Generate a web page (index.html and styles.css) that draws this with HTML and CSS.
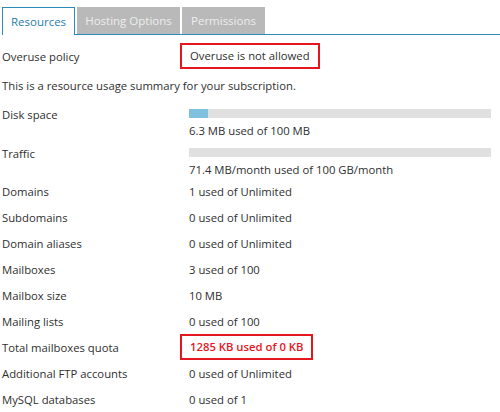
FILE: index.html
```html
<!DOCTYPE html>
<html>
<head>
<meta charset="utf-8">
<link rel="stylesheet" href="styles.css">
</head>
<body>
<div class="tabs">
  <div class="tab active">Resources</div>
  <div class="tab hosting">Hosting Options</div>
  <div class="tab perms">Permissions</div>
</div>
<div class="row first">
  <div class="label">Overuse policy</div>
  <div class="value"><span class="boxed">Overuse is not allowed</span></div>
</div>
<p class="summary">This is a resource usage summary for your subscription.</p>
<div class="bar-row disk">
  <div class="label">Disk space</div>
  <div class="value">
    <div class="bar"><div class="fill" style="width:6.3%"></div></div>
    <div class="bar-text">6.3 MB used of 100 MB</div>
  </div>
</div>
<div class="bar-row traffic">
  <div class="label">Traffic</div>
  <div class="value">
    <div class="bar"><div class="fill" style="width:0%"></div></div>
    <div class="bar-text">71.4 MB/month used of 100 GB/month</div>
  </div>
</div>
<div class="row"><div class="label">Domains</div><div class="value">1 used of Unlimited</div></div>
<div class="row"><div class="label">Subdomains</div><div class="value">0 used of Unlimited</div></div>
<div class="row"><div class="label">Domain aliases</div><div class="value">0 used of Unlimited</div></div>
<div class="row"><div class="label">Mailboxes</div><div class="value">3 used of 100</div></div>
<div class="row"><div class="label">Mailbox size</div><div class="value">10 MB</div></div>
<div class="row"><div class="label">Mailing lists</div><div class="value">0 used of 100</div></div>
<div class="row"><div class="label">Total mailboxes quota</div><div class="value"><span class="boxed alert">1285 KB used of 0 KB</span></div></div>
<div class="row"><div class="label">Additional FTP accounts</div><div class="value">0 used of Unlimited</div></div>
<div class="row"><div class="label">MySQL databases</div><div class="value">0 used of 1</div></div>
</body>
</html>
```
FILE: styles.css
```css
html, body {
  margin: 0;
  padding: 0;
  background: #fff;
}
body {
  font-family: "Open Sans", "Noto Sans", sans-serif;
  font-size: 11.3px;
  color: #2f2f2f;
  padding: 0 2px;
  overflow: hidden;
}
.tabs {
  display: flex;
  gap: 2px;
  padding-top: 7px;
  border-bottom: 1px solid #2a8ab8;
  margin-right: -2px;
}
.tab {
  height: 27px;
  line-height: 27px;
  padding: 0;
  background: #b9b9b9;
  color: #ededed;
  font-size: 11.5px;
  box-sizing: border-box;
  text-align: center;
  white-space: nowrap;
}
.tab.hosting {
  width: 103px;
}
.tab.perms {
  width: 83px;
}
.tab.active {
  background: #fff;
  color: #2a7ead;
  border: 1px solid #2a8ab8;
  border-bottom: none;
  height: 28px;
  margin-bottom: -1px;
  line-height: 27px;
  width: 73px;
}
.row {
  display: flex;
  height: 26px;
  align-items: center;
}
.row.first {
  margin-top: 8px;
}
.label {
  width: 187px;
  flex: none;
}
.value {
  flex: 1;
}
.boxed {
  display: inline-block;
  margin-left: -9px;
  padding: 3px 8px 4px 8px;
  border: 2px solid #e5161e;
}
.boxed.alert {
  color: #e5161e;
  font-weight: 600;
}
.summary {
  margin: 8px 0 0 0;
  line-height: 18px;
}
.bar-row {
  display: flex;
  align-items: flex-start;
}
.bar-row .label {
  line-height: 18px;
}
.bar-row.disk {
  margin-top: 11px;
}
.bar-row.traffic {
  margin-top: 6px;
}
.bar-row .value {
  padding-top: 3px;
  padding-right: 7px;
}
.bar {
  height: 9px;
  background: #e0e0e0;
}
.fill {
  height: 100%;
  background: #7fc1de;
}
.bar-text {
  line-height: 16px;
  margin-top: 5px;
}
```
